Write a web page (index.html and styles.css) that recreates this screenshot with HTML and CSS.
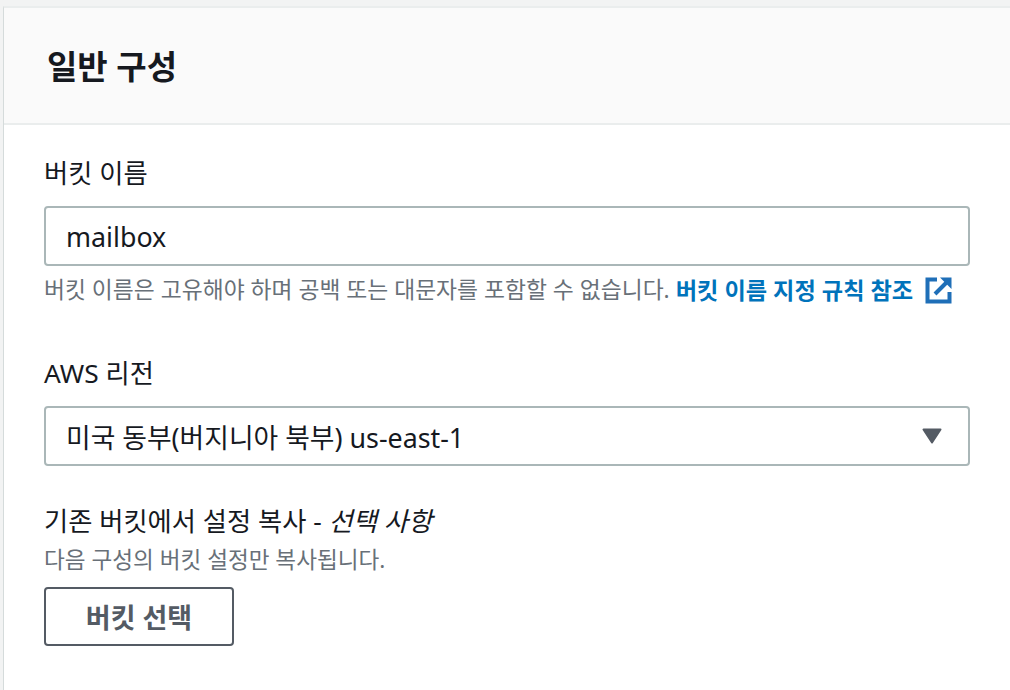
FILE: index.html
```html
<!DOCTYPE html>
<html lang="ko">
<head>
<meta charset="utf-8">
<link rel="stylesheet" href="styles.css">
</head>
<body>
<div class="page">
  <section class="card">
    <header class="card-header">
      <h2 class="title">일반 구성</h2>
    </header>
    <div class="card-body">
      <div class="field">
        <label class="label">버킷 이름</label>
        <div class="input">mailbox</div>
        <div class="hint">버킷 이름은 고유해야 하며 공백 또는 대문자를 포함할 수 없습니다. <a class="link" href="#">버킷 이름 지정 규칙 참조<svg class="ext" viewBox="0 0 27 27" width="27" height="27"><path d="M12 2.5H2.5v22h22V15" fill="none" stroke="currentColor" stroke-width="4"/><path d="M10 17L22 5" fill="none" stroke="currentColor" stroke-width="4"/><path d="M15 0.5h11.5V12z" fill="currentColor"/></svg></a></div>
      </div>
      <div class="field field-region">
        <label class="label">AWS 리전</label>
        <div class="input select">
          <span>미국 동부(버지니아 북부) us-east-1</span>
          <svg class="caret" viewBox="0 0 20 16" width="20" height="16"><path d="M1.5 1.5h17L10 14.5z" fill="#545b64" stroke="#545b64" stroke-width="2" stroke-linejoin="round"/></svg>
        </div>
      </div>
      <div class="field field-copy">
        <label class="label">기존 버킷에서 설정 복사 - <i>선택 사항</i></label>
        <div class="desc">다음 구성의 버킷 설정만 복사됩니다.</div>
        <button class="btn">버킷 선택</button>
      </div>
    </div>
  </section>
</div>
</body>
</html>
```

FILE: styles.css
```css
* { box-sizing: border-box; }
html, body { margin: 0; padding: 0; }
body {
  background: #f2f3f3;
  font-family: "Noto Sans", "Noto Sans CJK KR", sans-serif;
  color: #16191f;
  width: 1010px;
  height: 690px;
  overflow: hidden;
}
.page {
  padding: 6px 0 0 3px;
}
.card {
  background: #ffffff;
  border-top: 2px solid #eaeded;
  border-left: 1px solid #d5dbdb;
  height: 700px;
}
.card-header {
  background: #fafafa;
  height: 117px;
  border-bottom: 2px solid #eaeded;
  display: flex;
  align-items: center;
  padding-left: 43px;
}
.title {
  margin: 0;
  font-size: 33px;
  font-weight: 700;
  line-height: 40px;
  color: #16191f;
  padding-top: 2px;
}
.card-body {
  padding: 31px 40px 0 40px;
  display: flex;
  flex-direction: column;
}
.field { display: flex; flex-direction: column; }
.label {
  font-size: 26.3px;
  line-height: 34px;
  color: #16191f;
}
.label i { font-style: italic; }
.input {
  margin-top: 16px;
  height: 60px;
  border: 2px solid #aab7b8;
  border-radius: 4px;
  padding: 0 20px;
  display: flex;
  align-items: center;
  font-size: 26.8px;
  color: #16191f;
  width: 926px;
}
.hint {
  margin-top: 9px;
  font-size: 22.8px;
  line-height: 30px;
  color: #687078;
  display: flex;
  align-items: center;
  white-space: nowrap;
}
.link {
  color: #0073bb;
  font-weight: 700;
  font-size: 23.2px;
  text-decoration: none;
  margin-left: 6px;
  display: inline-flex;
  align-items: center;
}
.ext { margin-left: 12px; color: #1f6fb8; }
.field-region { margin-top: 51px; }
.select { justify-content: space-between; padding-right: 26px; }
.field-copy { margin-top: 38px; }
.desc {
  margin-top: 7px;
  font-size: 22.6px;
  line-height: 30px;
  color: #687078;
}
.btn {
  margin-top: 12px;
  width: 190px;
  height: 59px;
  border: 2px solid #545b64;
  border-radius: 4px;
  background: #ffffff;
  color: #545b64;
  font-family: inherit;
  font-size: 27px;
  font-weight: 700;
  padding: 0;
  cursor: pointer;
}
```
